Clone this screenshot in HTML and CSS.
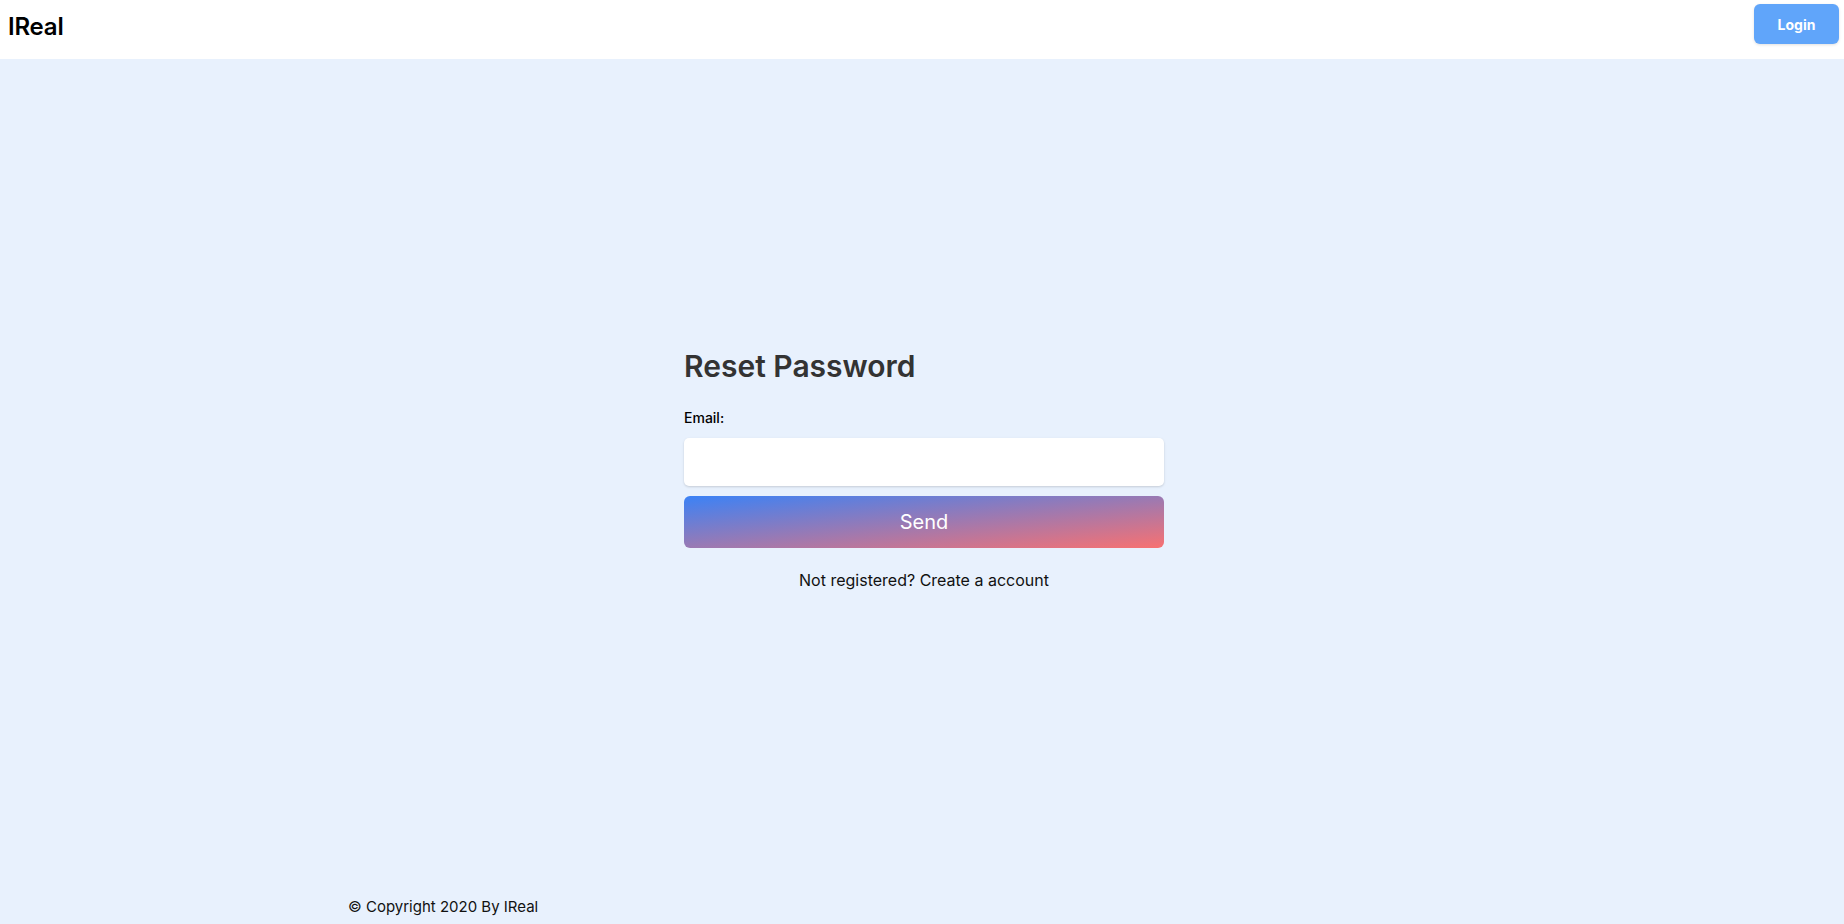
FILE: index.html
```html
<!DOCTYPE html>
<html lang="en">
<head>
<meta charset="utf-8">
<title>IReal - Reset Password</title>
<link rel="stylesheet" href="styles.css">
</head>
<body>
<div class="page">
  <header class="topbar">
    <a class="logo" href="#">IReal</a>
    <button class="login-btn" type="button">Login</button>
  </header>
  <main class="main">
    <form class="card">
      <h1 class="title">Reset Password</h1>
      <label class="label" for="email">Email:</label>
      <input class="input" id="email" type="email">
      <button class="send-btn" type="button">Send</button>
      <p class="register">Not registered? <a href="#">Create a account</a></p>
    </form>
  </main>
  <footer class="footer">
    <div class="footer-inner">© Copyright 2020 By IReal</div>
  </footer>
</div>
</body>
</html>
```

FILE: styles.css
```css
* { box-sizing: border-box; }
html, body { margin: 0; padding: 0; height: 100%; }
body {
  font-family: Inter, "Noto Sans", "Liberation Sans", sans-serif;
  background: #e8f1fd;
  color: #111;
}
.page {
  min-height: 100vh;
  display: flex;
  flex-direction: column;
}
.topbar {
  height: 59px;
  background: #fff;
  display: flex;
  align-items: flex-start;
  justify-content: space-between;
  padding: 4px 5px 0 8px;
}
.logo {
  font-size: 24px;
  font-weight: 600;
  color: #000;
  text-decoration: none;
  line-height: 1;
  margin-top: 11px;
  letter-spacing: -0.2px;
}
.login-btn {
  width: 85px;
  height: 40px;
  border: none;
  border-radius: 6px;
  background: #60a5fa;
  color: #fff;
  font-family: inherit;
  font-size: 14px;
  font-weight: 700;
  box-shadow: 0 1px 3px rgba(0,0,0,0.12);
  cursor: pointer;
}
.main {
  flex: 1;
  display: flex;
  align-items: center;
  justify-content: center;
  padding-left: 4px;
  padding-bottom: 10px;
}
.card {
  width: 480px;
  display: flex;
  flex-direction: column;
}
.title {
  margin: 0 0 24px;
  font-size: 30px;
  font-weight: 600;
  color: #333;
  line-height: 36px;
}
.label {
  font-size: 14px;
  font-weight: 500;
  color: #000;
  line-height: 20px;
  margin-bottom: 10px;
}
.input {
  height: 48px;
  border: none;
  border-radius: 5px;
  background: #fff;
  box-shadow: 0 1px 3px rgba(0,0,0,0.1), 0 1px 2px rgba(0,0,0,0.06);
  outline: none;
  margin-bottom: 10px;
  font-family: inherit;
  font-size: 16px;
  padding: 0 12px;
}
.send-btn {
  height: 52px;
  border: none;
  border-radius: 6px;
  background: linear-gradient(to bottom right, #3b82f6, #f87171);
  color: #fff;
  font-family: inherit;
  font-size: 20px;
  font-weight: 400;
  cursor: pointer;
}
.register {
  margin: 20px 0 0;
  text-align: center;
  font-size: 16px;
  line-height: 24px;
  color: #111;
}
.register a {
  color: inherit;
  text-decoration: none;
}
.footer {
  height: 34px;
}
.footer-inner {
  width: 1148px;
  margin: 0 auto;
  font-size: 15px;
  line-height: 20px;
  color: #111;
  padding-top: 7px;
}
```
